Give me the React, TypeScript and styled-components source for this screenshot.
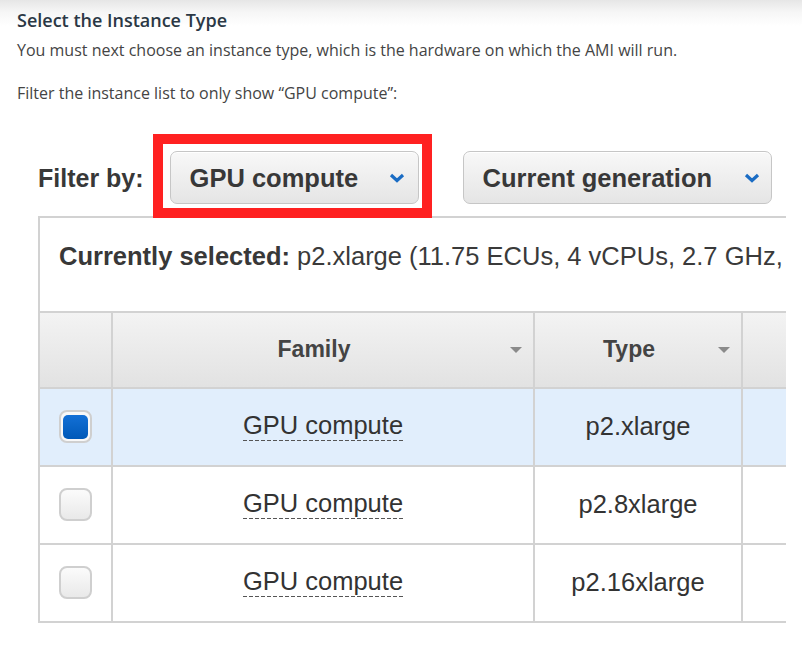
import { FC } from "react";
import styled, { createGlobalStyle } from "styled-components";

const GlobalStyle = createGlobalStyle`
  html, body {
    margin: 0;
    padding: 0;
    background: #fff;
  }
  * {
    box-sizing: border-box;
  }
`;

const Page = styled.div`
  width: 802px;
  height: 648px;
  overflow: hidden;
  background: linear-gradient(#e6e6e6 0px, #f6f6f6 12px, #fff 26px);
`;

const Intro = styled.div`
  padding: 8px 17px 0;
  font-family: "Open Sans", "DejaVu Sans", sans-serif;
  color: #444;
  h3 {
    margin: 0;
    font-size: 18px;
    font-weight: 600;
    line-height: 24px;
    color: #2b3845;
  }
  p {
    margin: 6px 0 0;
    font-size: 16px;
    line-height: 24px;
  }
  p + p {
    margin-top: 19px;
  }
`;

const Shot = styled.div`
  margin: 28.5px 0 0 38px;
  width: 748px;
  overflow: hidden;
  font-family: "Liberation Sans", Arial, sans-serif;
  color: #333;
`;

const FilterBar = styled.div`
  display: flex;
  align-items: center;
  height: 84px;
`;

const FilterLabel = styled.span`
  font-size: 25px;
  font-weight: 700;
  color: #383838;
  margin-top: 5px;
  white-space: nowrap;
`;

const Highlight = styled.div`
  margin-left: 9px;
  border: 10px solid #ff2121;
  padding: 7px 3px 4px 7px;
  position: relative;
  z-index: 1;
`;

const SelectButton = styled.div<{ $width: number; $shift?: number }>`
  display: flex;
  align-items: center;
  justify-content: space-between;
  width: ${(p) => p.$width}px;
  height: 53px;
  padding: 2px 11px 0 19px;
  margin-top: ${(p) => p.$shift || 0}px;
  margin-left: ${(p) => (p.$shift ? 31 : 0)}px;
  border: 1px solid #c6c6c6;
  border-radius: 7px;
  background: linear-gradient(#f8f8f8, #e5e5e5);
  box-shadow: inset 0 1px 0 #fff;
  font-size: 25.5px;
  font-weight: 700;
  color: #383838;
  white-space: nowrap;
  flex-shrink: 0;
`;

const Grid = styled.div`
  width: 900px;
  margin-top: -2px;
  border-left: 2px solid #d2d2d2;
  border-top: 2px solid #d2d2d2;
`;

const SelectedBar = styled.div`
  height: 93px;
  padding: 23px 0 0 19px;
  font-size: 25.5px;
  line-height: 30px;
  white-space: nowrap;
  color: #3a3a3a;
  b {
    color: #383838;
  }
`;

const Row = styled.div<{ $head?: boolean; $active?: boolean }>`
  display: grid;
  grid-template-columns: 73px 422px 208px 1fr;
  height: 78px;
  border-top: ${(p) => (p.$head ? "2px solid #d2d2d2" : "none")};
  border-bottom: 2px solid #d2d2d2;
  background: ${(p) =>
    p.$head ? "linear-gradient(#f3f3f3, #e2e2e2)" : p.$active ? "#e1eefc" : "#fff"};
`;

const Cell = styled.div<{ $head?: boolean }>`
  position: relative;
  display: flex;
  align-items: center;
  justify-content: center;
  border-right: 2px solid #d2d2d2;
  padding-right: ${(p) => (p.$head ? 18 : 0)}px;
  font-size: ${(p) => (p.$head ? 23 : 25.5)}px;
  font-weight: ${(p) => (p.$head ? 700 : 400)};
  color: ${(p) => (p.$head ? "#444" : "#333")};
  white-space: nowrap;
`;

const SortArrow = styled.span`
  position: absolute;
  right: 11px;
  top: 50%;
  margin-top: -3px;
  width: 0;
  height: 0;
  border-left: 6px solid transparent;
  border-right: 6px solid transparent;
  border-top: 6px solid #8a8a8a;
`;

const Check = styled.span<{ $on?: boolean }>`
  display: flex;
  align-items: center;
  justify-content: center;
  width: 33px;
  height: 33px;
  border: 2px solid #cfcfcf;
  border-radius: 8px;
  background: ${(p) => (p.$on ? "#f8f8f8" : "linear-gradient(#fbfbfb, #e9e9e9)")};
  &::after {
    content: "";
    display: ${(p) => (p.$on ? "block" : "none")};
    width: 25px;
    height: 24px;
    border-radius: 5px;
    background: linear-gradient(#1370d6, #0059b8);
  }
`;

const Dotted = styled.span`
  display: inline-block;
  line-height: 26px;
  padding-bottom: 3px;
  background-image: repeating-linear-gradient(
    to right,
    #555 0 4px,
    transparent 4px 6px
  );
  background-size: 100% 1px;
  background-repeat: no-repeat;
  background-position: left bottom;
`;

const Chevron: FC = () => (
  <svg width="16" height="10" viewBox="0 0 16 10">
    <path d="M2 2 L8 7.5 L14 2" fill="none" stroke="#1a6cc4" strokeWidth="3.2" />
  </svg>
);

const instances = [
  { family: "GPU compute", type: "p2.xlarge", selected: true },
  { family: "GPU compute", type: "p2.8xlarge", selected: false },
  { family: "GPU compute", type: "p2.16xlarge", selected: false },
];

const App: FC = () => {
  return (
    <Page>
      <GlobalStyle />
      <Intro>
        <h3>Select the Instance Type</h3>
        <p>You must next choose an instance type, which is the hardware on which the AMI will run.</p>
        <p>Filter the instance list to only show “GPU compute”:</p>
      </Intro>
      <Shot>
        <FilterBar>
          <FilterLabel>Filter by:</FilterLabel>
          <Highlight>
            <SelectButton $width={249} style={{ paddingRight: 13 }}>
              GPU compute
              <Chevron />
            </SelectButton>
          </Highlight>
          <SelectButton $width={309} $shift={3}>
            Current generation
            <Chevron />
          </SelectButton>
        </FilterBar>
        <Grid>
          <SelectedBar>
            <b>Currently selected:</b> p2.xlarge (11.75 ECUs, 4 vCPUs, 2.7 GHz,
          </SelectedBar>
          <Row $head>
            <Cell $head />
            <Cell $head>
              Family
              <SortArrow />
            </Cell>
            <Cell $head>
              Type
              <SortArrow />
            </Cell>
            <Cell $head />
          </Row>
          {instances.map((item) => (
            <Row key={item.type} $active={item.selected}>
              <Cell>
                <Check $on={item.selected} />
              </Cell>
              <Cell>
                <Dotted>{item.family}</Dotted>
              </Cell>
              <Cell>{item.type}</Cell>
              <Cell />
            </Row>
          ))}
        </Grid>
      </Shot>
    </Page>
  );
};

export default App;
